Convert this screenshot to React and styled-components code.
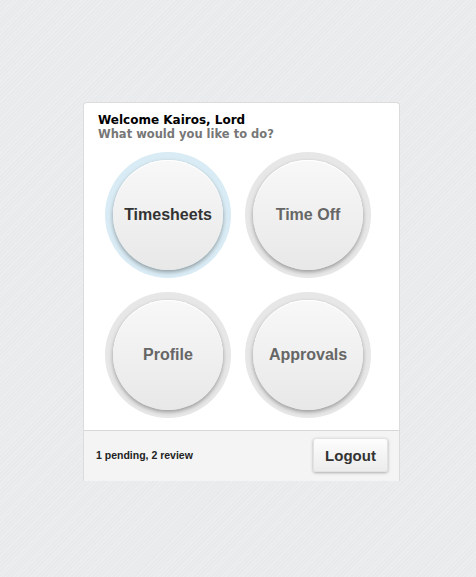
import React from 'react'
import styled, { createGlobalStyle } from 'styled-components'

const GlobalStyle = createGlobalStyle`
  html, body {
    margin: 0;
    padding: 0;
  }
  body {
    min-height: 577px;
    background-color: #e9eaec;
    background-image: repeating-linear-gradient(
      135deg,
      rgba(255,255,255,0.18) 0px,
      rgba(255,255,255,0.18) 1px,
      transparent 1px,
      transparent 3px
    );
    font-family: "Liberation Sans", Arial, sans-serif;
  }
`

const Page = styled.div`
  padding: 102px 0 0 83px;
`

const Card = styled.div`
  width: 315px;
  background: #fff;
  border: 1px solid #dcdcdc;
  border-bottom: none;
  border-radius: 4px 4px 0 0;
  overflow: hidden;
`

const Header = styled.div`
  padding: 10px 15px 0 14px;
  font-family: "DejaVu Sans", Verdana, sans-serif;
  font-weight: bold;
  line-height: 14px;
`

const Title = styled.div`
  font-size: 12px;
  color: #000;
`

const Subtitle = styled.div`
  font-size: 11.5px;
  color: #777;
`

const Grid = styled.div`
  display: grid;
  grid-template-columns: repeat(2, 126px);
  gap: 14px;
  padding: 11px 0 12px 21px;
`

const Ring = styled.div`
  width: 126px;
  height: 126px;
  border-radius: 50%;
  background: ${p => (p.$active ? '#d9ebf4' : '#e7e7e7')};
  display: flex;
  align-items: center;
  justify-content: center;
`

const Tile = styled.button`
  width: 110px;
  height: 110px;
  border-radius: 50%;
  border: none;
  padding: 0;
  background: linear-gradient(#f8f8f8, #e8e8e8);
  box-shadow: 0 2px 4px rgba(0,0,0,0.35), inset 0 1px 0 #fff;
  font-family: "Liberation Sans", Arial, sans-serif;
  font-weight: bold;
  font-size: 16px;
  color: ${p => (p.$active ? '#333' : '#666')};
  cursor: pointer;
`

const Footer = styled.div`
  height: 51px;
  border-top: 1px solid #d8d8d8;
  background: #f4f4f4;
  display: flex;
  align-items: center;
  justify-content: space-between;
  padding: 0 11px 2px 12px;
  box-sizing: border-box;
`

const Status = styled.span`
  font-size: 10.5px;
  font-weight: bold;
  color: #222;
`

const LogoutButton = styled.button`
  width: 75px;
  height: 34px;
  border: 1px solid #e2e2e2;
  border-radius: 3px;
  background: linear-gradient(#fdfdfd, #ececec);
  box-shadow: 0 1px 3px rgba(0,0,0,0.3);
  font-family: "Liberation Sans", Arial, sans-serif;
  font-weight: bold;
  font-size: 15px;
  color: #333;
  cursor: pointer;
`

const tiles = [
  { label: 'Timesheets', active: true },
  { label: 'Time Off' },
  { label: 'Profile' },
  { label: 'Approvals' },
]

export default function App() {
  return (
    <>
      <GlobalStyle />
      <Page>
        <Card>
          <Header>
            <Title>Welcome Kairos, Lord</Title>
            <Subtitle>What would you like to do?</Subtitle>
          </Header>
          <Grid>
            {tiles.map(t => (
              <Ring key={t.label} $active={t.active}>
                <Tile $active={t.active}>{t.label}</Tile>
              </Ring>
            ))}
          </Grid>
          <Footer>
            <Status>1 pending, 2 review</Status>
            <LogoutButton>Logout</LogoutButton>
          </Footer>
        </Card>
      </Page>
    </>
  )
}
